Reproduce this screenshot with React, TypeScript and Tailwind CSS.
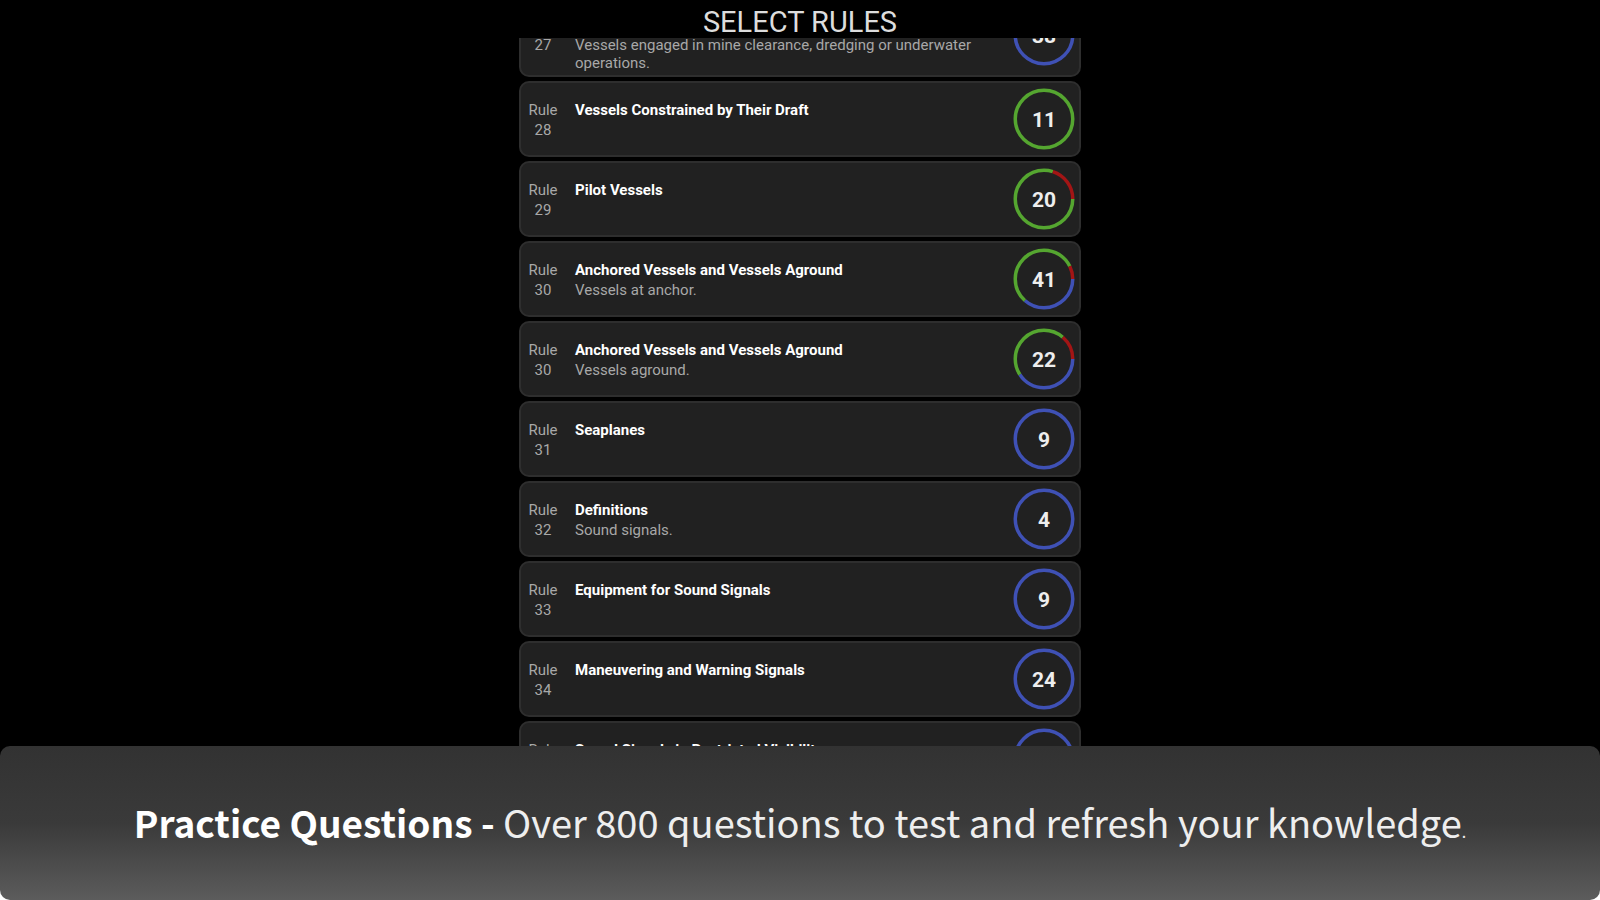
type Rule = {
  number: number;
  title: string;
  detail?: string;
  total: number;
  correct: number;
  wrong: number;
  tall?: boolean;
};

const rules: Rule[] = [
  { number: 27, title: "Vessels Not Under Command", detail: "Vessels engaged in mine clearance, dredging or underwater operations.", total: 38, correct: 0, wrong: 0, tall: true },
  { number: 28, title: "Vessels Constrained by Their Draft", total: 11, correct: 11, wrong: 0 },
  { number: 29, title: "Pilot Vessels", total: 20, correct: 16, wrong: 4 },
  { number: 30, title: "Anchored Vessels and Vessels Aground", detail: "Vessels at anchor.", total: 41, correct: 23, wrong: 3 },
  { number: 30, title: "Anchored Vessels and Vessels Aground", detail: "Vessels aground.", total: 22, correct: 10, wrong: 3 },
  { number: 31, title: "Seaplanes", total: 9, correct: 0, wrong: 0 },
  { number: 32, title: "Definitions", detail: "Sound signals.", total: 4, correct: 0, wrong: 0 },
  { number: 33, title: "Equipment for Sound Signals", total: 9, correct: 0, wrong: 0 },
  { number: 34, title: "Maneuvering and Warning Signals", total: 24, correct: 0, wrong: 0 },
  { number: 35, title: "Sound Signals in Restricted Visibility", total: 22, correct: 0, wrong: 0 },
];

// Segments run clockwise from three o'clock: unanswered, correct, wrong.
function ProgressRing({ total, correct, wrong }: Pick<Rule, "total" | "correct" | "wrong">) {
  const open = total - correct - wrong;
  const segments = [
    { color: "#3f51b5", start: 0, size: open },
    { color: "#55a630", start: open, size: correct },
    { color: "#a31515", start: open + correct, size: wrong },
  ];
  return (
    <span className="grid size-[62px] shrink-0 place-items-center">
      <svg viewBox="0 0 62 62" className="col-start-1 row-start-1 size-full" aria-hidden="true">
        {segments
          .filter((s) => s.size > 0)
          .map((s) => (
            <circle
              key={s.color}
              cx="31"
              cy="31"
              r="28.75"
              fill="none"
              stroke={s.color}
              strokeWidth="3.5"
              pathLength={total}
              strokeDasharray={`${s.size} ${total - s.size}`}
              strokeDashoffset={-s.start}
            />
          ))}
      </svg>
      <span className="col-start-1 row-start-1 pt-1 text-[21px] font-bold text-[#eeeeee]">{total}</span>
    </span>
  );
}

function RuleCard({ rule }: { rule: Rule }) {
  return (
    <li>
      <button
        type="button"
        className={`flex w-full items-center rounded-[10px] border-2 border-[#2e2e2e] bg-[#212121] pr-1 text-left ${rule.tall ? "h-[84px]" : "h-[76px]"}`}
      >
        <span className={`flex min-w-0 flex-1 self-stretch ${rule.tall ? "pt-5" : "pt-[17px]"}`}>
          <span className="flex w-11 shrink-0 flex-col text-center text-[15px] leading-5 text-[#a8a8a8]">
            <span>Rule</span>
            <span>{rule.number}</span>
          </span>
          <span className="flex min-w-0 flex-col gap-px pr-8 pl-2.5">
            <span className="text-[15px] leading-5 font-bold text-white">{rule.title}</span>
            {rule.detail && <span className="text-[15px] leading-[18px] text-[#a8a8a8]">{rule.detail}</span>}
          </span>
        </span>
        <ProgressRing total={rule.total} correct={rule.correct} wrong={rule.wrong} />
      </button>
    </li>
  );
}

export default function App() {
  return (
    <div className="flex h-screen flex-col bg-black font-['Roboto',sans-serif]">
      <header className="flex h-[38px] shrink-0 items-end justify-center">
        <h1 className="text-[29px] leading-8 text-[#dddddd]">SELECT RULES</h1>
      </header>
      <main className="min-h-0 flex-1 overflow-hidden">
        <ul className="mx-auto -mt-[45px] flex w-full max-w-[562px] flex-col gap-1">
          {rules.map((rule, i) => (
            <RuleCard key={i} rule={rule} />
          ))}
        </ul>
      </main>
      <footer className="shrink-0 bg-linear-to-b from-black from-50% to-white to-50%">
        <p className="flex h-[154px] items-center justify-center rounded-[10px] bg-linear-to-b from-[#323232] via-[#3a3a3a] to-[#5c5c5c] font-['Noto_Sans_CJK_SC',sans-serif] text-[38px] leading-none text-[#eeeeee]">
          <span>
            <strong className="text-[37px] font-bold text-white">Practice Questions -</strong> Over 800 questions to
            test and refresh your knowledge<span className="text-base">.</span>
          </span>
        </p>
      </footer>
    </div>
  );
}
